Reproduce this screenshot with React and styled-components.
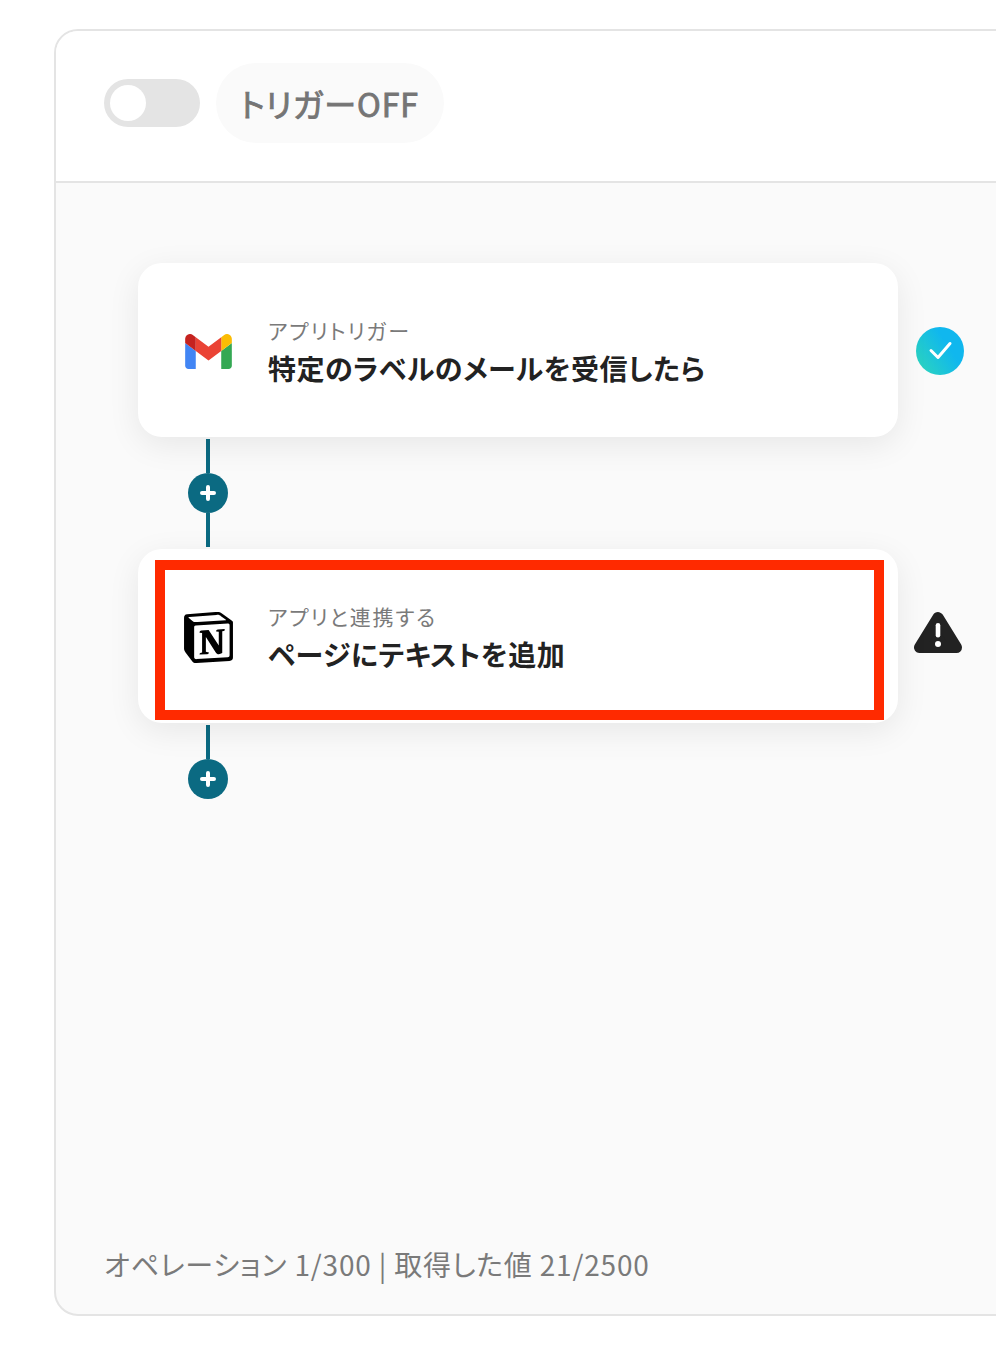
import React from "react";
import styled, { createGlobalStyle } from "styled-components";
import { SiNotion } from "react-icons/si";

const Global = createGlobalStyle`
  html, body { margin: 0; padding: 0; background: #fff; overflow: hidden; }
  body { font-family: "Noto Sans CJK JP", "Noto Sans", sans-serif; }
  svg { flex: none; }
`;
const Page = styled.div`
  width: 996px; height: 1370px; padding: 29px 0 0 54px; box-sizing: border-box; overflow: hidden;
`;
const Frame = styled.section`
  width: 1100px; height: 1287px; box-sizing: border-box; border: 2px solid #e4e4e4; border-radius: 24px;
  background: #fafafa; display: flex; flex-direction: column; overflow: hidden;
`;
const Header = styled.header`
  height: 152px; flex: none; box-sizing: border-box; background: #fff; border-bottom: 2px solid #e4e4e4;
  display: flex; align-items: center; gap: 16px; padding: 0 0 6px 48px;
`;
const Toggle = styled.div`
  width: 96px; height: 48px; border-radius: 24px; background: #e4e4e4; display: flex; align-items: center; padding-left: 6px; box-sizing: border-box;
`;
const Knob = styled.div`width: 36px; height: 36px; border-radius: 50%; background: #fff;`;
const Pill = styled.div`
  height: 80px; width: 228px; box-sizing: border-box; border-radius: 40px; background: #fafafa; color: #757575;
  display: flex; align-items: center; padding-left: 24px;
  font-size: 32px; font-weight: 400; -webkit-text-stroke: .9px #757575; letter-spacing: 1px; font-feature-settings: "palt"; white-space: nowrap;
`;
const Canvas = styled.div`
  flex: 1; display: flex; flex-direction: column; padding: 80px 0 0 82px; position: relative;
`;
const Row = styled.div`display: flex; align-items: center; gap: 18px;`;
const Card = styled.div`
  width: 760px; height: 174px; box-sizing: border-box; background: #fff; border-radius: 24px; position: relative;
  box-shadow: 0 8px 32px rgba(0,0,0,.08);
  display: flex; align-items: center; padding-left: 46px; gap: 36px;
`;
const IconBox = styled.div`width: 48px; height: 50px; flex: none; padding-top: 2px; display: flex; align-items: center; justify-content: center;`;
const Texts = styled.div`display: flex; flex-direction: column; padding-top: 6px;`;
const Sub = styled.div`font-size: 21px; line-height: 30px; color: #7a7a7a; white-space: nowrap; font-feature-settings: "palt"; letter-spacing: 1.8px;`;
const Title = styled.div`font-size: 28px; line-height: 46px; font-weight: 700; color: #222; font-feature-settings: "palt"; letter-spacing: .47px; white-space: nowrap;`;
const Status = styled.div`
  width: 48px; height: 48px; flex: none; box-sizing: border-box; display: flex; align-items: center; justify-content: center;
  padding: ${p => p.$pad};
`;
const Connector = styled.div`
  width: 40px; margin-left: 50px; display: flex; flex-direction: column; align-items: center; height: ${p => p.$h}px; padding: 2px 0; box-sizing: border-box;
`;
const Line = styled.div`width: 4px; background: #0b6a82; flex: ${p => p.$grow ? 1 : "none"}; height: ${p => p.$h || 0}px;`;
const Plus = styled.div`
  width: 40px; height: 40px; border-radius: 50%; background: #0b6a82; flex: none; display: flex; align-items: center; justify-content: center;
`;
const Highlight = styled.div`
  position: absolute; left: 17px; top: 11px; width: 729px; height: 160px; box-sizing: border-box; border: 10px solid #ff2a00;
`;
const Footer = styled.div`
  position: absolute; left: 48px; bottom: 28px; font-size: 28px; line-height: 44px; color: #7a7a7a; white-space: nowrap; font-weight: 400; letter-spacing: .82px; font-feature-settings: "palt";
`;
const PlusIcon = () => (
  <svg width="16" height="16" viewBox="0 0 16 16"><path d="M8 2v12M2 8h12" stroke="#fff" strokeWidth="4" strokeLinecap="round" /></svg>
);
const Gmail = () => (
  <svg width="47" height="35" viewBox="52 42 88 66">
    <path fill="#4285f4" d="M58 108h14V74L52 59v43c0 3.32 2.69 6 6 6" />
    <path fill="#34a853" d="M120 108h14c3.32 0 6-2.69 6-6V59l-20 15" />
    <path fill="#fbbc04" d="M120 48v26l20-15v-8c0-7.42-8.47-11.65-14.4-7.2" />
    <path fill="#ea4335" d="M72 74V48l24 18 24-18v26L96 92" />
    <path fill="#c5221f" d="M52 51v8l20 15V48l-5.6-4.2c-5.94-4.45-14.4-.22-14.4 7.2" />
  </svg>
);
const Check = () => (
  <svg width="48" height="48" viewBox="0 0 48 48">
    <defs><linearGradient id="g" x1="0" y1="1" x2="1" y2="0.35"><stop offset="0" stopColor="#2fd8b8" /><stop offset="0.75" stopColor="#10b7ee" /></linearGradient></defs>
    <circle cx="24" cy="24" r="24" fill="url(#g)" />
    <path d="M15 23.5l7 7 12-14" fill="none" stroke="#fff" strokeWidth="3" strokeLinecap="round" strokeLinejoin="round" />
  </svg>
);
const Warning = () => (
  <svg width="48" height="42" viewBox="0 0 48 42">
    <path d="M24 6.5L5.5 36.5h37z" fill="#222" stroke="#222" strokeWidth="11" strokeLinejoin="round" />
    <path d="M24 14.3v10" stroke="#fff" strokeWidth="4.6" strokeLinecap="round" />
    <circle cx="24" cy="33" r="3" fill="#fff" />
  </svg>
);
export default function App() {
  return (
    <Page>
      <Global />
      <Frame>
        <Header>
          <Toggle><Knob /></Toggle>
          <Pill>トリガーOFF</Pill>
        </Header>
        <Canvas>
          <Row>
            <Card>
              <IconBox><Gmail /></IconBox>
              <Texts><Sub>アプリトリガー</Sub><Title>特定のラベルのメールを受信したら</Title></Texts>
            </Card>
            <Status $pad="2px 0 0 0"><Check /></Status>
          </Row>
          <Connector $h={112}>
            <Line $h={34} />
            <Plus><PlusIcon /></Plus>
            <Line $grow />
          </Connector>
          <Row>
            <Card>
              <IconBox><SiNotion size={51} color="#000" /></IconBox>
              <Texts><Sub>アプリと連携する</Sub><Title>ページにテキストを追加</Title></Texts>
              <Highlight />
            </Card>
            <Status $pad="0 4px 8px 0"><Warning /></Status>
          </Row>
          <Connector $h={76}>
            <Line $h={34} />
            <Plus><PlusIcon /></Plus>
          </Connector>
          <Footer>オペレーション 1/300 | 取得した値 21/2500</Footer>
        </Canvas>
      </Frame>
    </Page>
  );
}
